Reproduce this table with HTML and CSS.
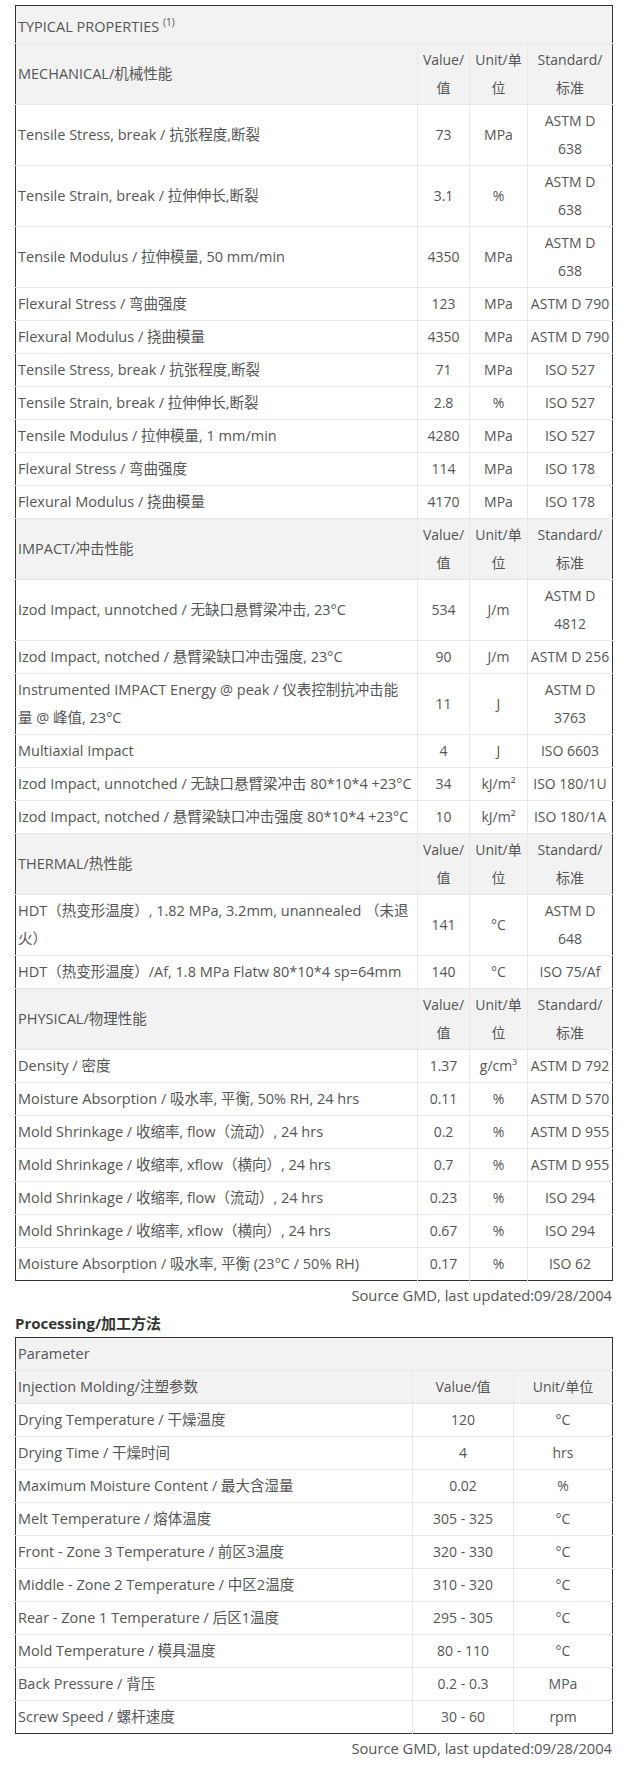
FILE: index.html
```html
<!DOCTYPE html>
<html lang="zh-CN">
<head>
<meta charset="utf-8">
<title>Typical Properties</title>
<link rel="stylesheet" href="styles.css">
</head>
<body>
<div class="page">
  <table class="grid props">
    <colgroup><col class="p1"><col class="p2"><col class="p3"><col class="p4"></colgroup>
    <tr class="title"><td colspan="4">TYPICAL PROPERTIES <sup>(1)</sup></td></tr>
    <tr class="head"><td>MECHANICAL/机械性能</td><td class="c">Value/值</td><td class="c">Unit/单位</td><td class="c">Standard/<span class="nw">标准</span></td></tr>
    <tr><td>Tensile Stress, break / 抗张程度,断裂</td><td class="c">73</td><td class="c">MPa</td><td class="c">ASTM D<br>638</td></tr>
    <tr><td>Tensile Strain, break / 拉伸伸长,断裂</td><td class="c">3.1</td><td class="c">%</td><td class="c">ASTM D<br>638</td></tr>
    <tr><td>Tensile Modulus / 拉伸模量, 50 mm/min</td><td class="c">4350</td><td class="c">MPa</td><td class="c">ASTM D<br>638</td></tr>
    <tr><td>Flexural Stress / 弯曲强度</td><td class="c">123</td><td class="c">MPa</td><td class="c nw">ASTM D 790</td></tr>
    <tr><td>Flexural Modulus / 挠曲模量</td><td class="c">4350</td><td class="c">MPa</td><td class="c nw">ASTM D 790</td></tr>
    <tr><td>Tensile Stress, break / 抗张程度,断裂</td><td class="c">71</td><td class="c">MPa</td><td class="c nw">ISO 527</td></tr>
    <tr><td>Tensile Strain, break / 拉伸伸长,断裂</td><td class="c">2.8</td><td class="c">%</td><td class="c nw">ISO 527</td></tr>
    <tr><td>Tensile Modulus / 拉伸模量, 1 mm/min</td><td class="c">4280</td><td class="c">MPa</td><td class="c nw">ISO 527</td></tr>
    <tr><td>Flexural Stress / 弯曲强度</td><td class="c">114</td><td class="c">MPa</td><td class="c nw">ISO 178</td></tr>
    <tr><td>Flexural Modulus / 挠曲模量</td><td class="c">4170</td><td class="c">MPa</td><td class="c nw">ISO 178</td></tr>
    <tr class="head"><td>IMPACT/冲击性能</td><td class="c">Value/值</td><td class="c">Unit/单位</td><td class="c">Standard/<span class="nw">标准</span></td></tr>
    <tr><td>Izod Impact, unnotched / 无缺口悬臂梁冲击, 23°C</td><td class="c">534</td><td class="c">J/m</td><td class="c">ASTM D<br>4812</td></tr>
    <tr><td>Izod Impact, notched / 悬臂梁缺口冲击强度, 23°C</td><td class="c">90</td><td class="c">J/m</td><td class="c nw">ASTM D 256</td></tr>
    <tr><td>Instrumented IMPACT Energy @ peak / 仪表控制抗冲击能<br>量 @ 峰值, 23°C</td><td class="c">11</td><td class="c">J</td><td class="c">ASTM D<br>3763</td></tr>
    <tr><td>Multiaxial Impact</td><td class="c">4</td><td class="c">J</td><td class="c nw">ISO 6603</td></tr>
    <tr><td class="nw">Izod Impact, unnotched / 无缺口悬臂梁冲击 80*10*4 +23°C</td><td class="c">34</td><td class="c nw">kJ/m²</td><td class="c nw">ISO 180/1U</td></tr>
    <tr><td class="nw">Izod Impact, notched / 悬臂梁缺口冲击强度 80*10*4 +23°C</td><td class="c">10</td><td class="c nw">kJ/m²</td><td class="c nw">ISO 180/1A</td></tr>
    <tr class="head"><td>THERMAL/热性能</td><td class="c">Value/值</td><td class="c">Unit/单位</td><td class="c">Standard/<span class="nw">标准</span></td></tr>
    <tr><td>HDT（热变形温度）, 1.82 MPa, 3.2mm, unannealed （未退<br>火）</td><td class="c">141</td><td class="c">°C</td><td class="c">ASTM D<br>648</td></tr>
    <tr><td class="nw">HDT（热变形温度）/Af, 1.8 MPa Flatw 80*10*4 sp=64mm</td><td class="c">140</td><td class="c">°C</td><td class="c nw">ISO 75/Af</td></tr>
    <tr class="head"><td>PHYSICAL/物理性能</td><td class="c">Value/值</td><td class="c">Unit/单位</td><td class="c">Standard/<span class="nw">标准</span></td></tr>
    <tr><td>Density / 密度</td><td class="c">1.37</td><td class="c nw">g/cm³</td><td class="c nw">ASTM D 792</td></tr>
    <tr><td>Moisture Absorption / 吸水率, 平衡, 50% RH, 24 hrs</td><td class="c">0.11</td><td class="c">%</td><td class="c nw">ASTM D 570</td></tr>
    <tr><td>Mold Shrinkage / 收缩率, flow（流动）, 24 hrs</td><td class="c">0.2</td><td class="c">%</td><td class="c nw">ASTM D 955</td></tr>
    <tr><td>Mold Shrinkage / 收缩率, xflow（横向）, 24 hrs</td><td class="c">0.7</td><td class="c">%</td><td class="c nw">ASTM D 955</td></tr>
    <tr><td>Mold Shrinkage / 收缩率, flow（流动）, 24 hrs</td><td class="c">0.23</td><td class="c">%</td><td class="c nw">ISO 294</td></tr>
    <tr><td>Mold Shrinkage / 收缩率, xflow（横向）, 24 hrs</td><td class="c">0.67</td><td class="c">%</td><td class="c nw">ISO 294</td></tr>
    <tr><td>Moisture Absorption / 吸水率, 平衡 (23°C / 50% RH)</td><td class="c">0.17</td><td class="c">%</td><td class="c nw">ISO 62</td></tr>
  </table>
  <p class="source">Source GMD, last updated:09/28/2004</p>

  <h3 class="section">Processing/加工方法</h3>
  <table class="grid proc">
    <colgroup><col class="q1"><col class="q2"><col class="q3"></colgroup>
    <tr class="head"><td colspan="3">Parameter</td></tr>
    <tr class="head"><td>Injection Molding/注塑参数</td><td class="c">Value/值</td><td class="c">Unit/单位</td></tr>
    <tr><td>Drying Temperature / 干燥温度</td><td class="c">120</td><td class="c">°C</td></tr>
    <tr><td>Drying Time / 干燥时间</td><td class="c">4</td><td class="c">hrs</td></tr>
    <tr><td>Maximum Moisture Content / 最大含湿量</td><td class="c">0.02</td><td class="c">%</td></tr>
    <tr><td>Melt Temperature / 熔体温度</td><td class="c">305 - 325</td><td class="c">°C</td></tr>
    <tr><td>Front - Zone 3 Temperature / 前区3温度</td><td class="c">320 - 330</td><td class="c">°C</td></tr>
    <tr><td>Middle - Zone 2 Temperature / 中区2温度</td><td class="c">310 - 320</td><td class="c">°C</td></tr>
    <tr><td>Rear - Zone 1 Temperature / 后区1温度</td><td class="c">295 - 305</td><td class="c">°C</td></tr>
    <tr><td>Mold Temperature / 模具温度</td><td class="c">80 - 110</td><td class="c">°C</td></tr>
    <tr><td>Back Pressure / 背压</td><td class="c">0.2 - 0.3</td><td class="c">MPa</td></tr>
    <tr><td>Screw Speed / 螺杆速度</td><td class="c">30 - 60</td><td class="c">rpm</td></tr>
  </table>
  <p class="source">Source GMD, last updated:09/28/2004</p>
</div>
</body>
</html>
```

FILE: styles.css
```css
html, body {
  margin: 0;
  padding: 0;
  background: #fff;
}
body {
  font-family: "Open Sans", "Noto Sans CJK SC", sans-serif;
  font-size: 14.5px;
  color: #555;
}
.page {
  width: 597px;
  margin-left: 15px;
  padding-top: 5px;
}
.nw { white-space: nowrap; }
.grid {
  width: 597px;
  border-collapse: collapse;
  table-layout: fixed;
  border: 1px solid #333;
}
.grid td {
  border: 1px solid #e8e8e8;
  padding: 2px 2px;
  line-height: 28px;
  vertical-align: middle;
  text-align: left;
}
.grid tr td:first-child { border-left: none; }
.grid tr td:last-child { border-right: none; }
.grid tr:first-child td { border-top: none; }
.grid tr:last-child td { border-bottom: none; }
.grid td.c { text-align: center; font-size: 14px; }
.grid td.nw { white-space: nowrap; }
.grid tr.head td,
.grid tr.title td { background: #f2f2f2; }
.grid tr.title td { padding-top: 7px; padding-bottom: 2px; }
.grid sup { font-size: 10px; line-height: 0; vertical-align: 6px; }
.p1 { width: 402px; }
.p2 { width: 52px; }
.p3 { width: 58px; }
.p4 { width: 85px; }
.q1 { width: 397px; }
.q2 { width: 101px; }
.q3 { width: 99px; }
.source {
  margin: 0;
  text-align: right;
  font-size: 14.7px;
  line-height: 29px;
  padding-right: 0;
}
.section {
  margin: 0;
  font-size: 15px;
  font-weight: bold;
  color: #333;
  line-height: 27px;
}
```
